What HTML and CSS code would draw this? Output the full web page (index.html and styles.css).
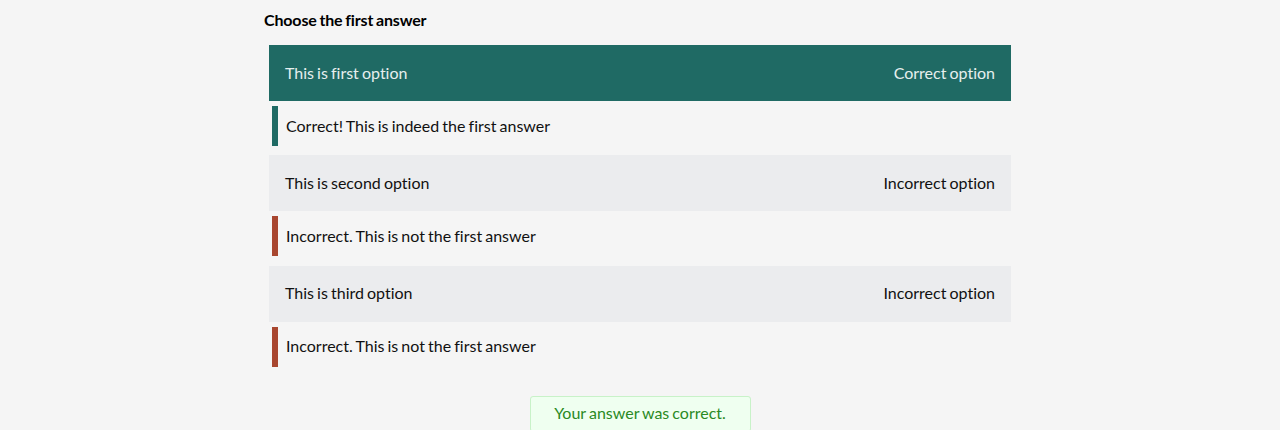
FILE: index.html
```html
<!DOCTYPE html>
<html lang="en">
<head>
<meta charset="utf-8">
<title>Quiz</title>
<link rel="stylesheet" href="styles.css">
</head>
<body>
<main class="quiz">
  <h2 class="question">Choose the first answer</h2>
  <div class="options">
    <div class="option option--correct">
      <span>This is first option</span>
      <span>Correct option</span>
    </div>
    <div class="feedback feedback--correct">Correct! This is indeed the first answer</div>
    <div class="option">
      <span>This is second option</span>
      <span>Incorrect option</span>
    </div>
    <div class="feedback feedback--wrong">Incorrect. This is not the first answer</div>
    <div class="option">
      <span>This is third option</span>
      <span>Incorrect option</span>
    </div>
    <div class="feedback feedback--wrong">Incorrect. This is not the first answer</div>
  </div>
  <div class="result-wrap">
    <div class="result">Your answer was correct.</div>
  </div>
</main>
</body>
</html>
```

FILE: styles.css
```css
html, body {
  margin: 0;
  padding: 0;
  background: #f5f5f5;
}
body {
  font-family: Lato, "Noto Sans", sans-serif;
  font-size: 16px;
  color: #111;
  word-spacing: -1px;
  font-variant-ligatures: none;
}
.quiz {
  width: 752px;
  margin: 0 auto;
  padding-top: 10px;
}
.question {
  margin: 0;
  font-size: 16px;
  font-weight: 700;
  line-height: 20px;
  letter-spacing: -0.15px;
  color: #000;
}
.options {
  margin: 15px 5px 0;
  display: flex;
  flex-direction: column;
}
.option {
  height: 56px;
  box-sizing: border-box;
  display: flex;
  align-items: center;
  justify-content: space-between;
  padding: 0 16px 2px;
  background: #ebecee;
  color: #111;
}
.option--correct {
  background: #1f6a64;
  color: #e6efee;
}
.feedback {
  margin: 5px 0 9.4px 3px;
  height: 40px;
  box-sizing: border-box;
  display: flex;
  align-items: center;
  padding: 0 0 2px 8px;
  border-left: 6px solid #a8462f;
  color: #111;
}
.feedback--correct {
  border-left-color: #1f6a64;
}
.feedback:last-child {
  margin-bottom: 0;
}
.result-wrap {
  display: flex;
  justify-content: center;
  margin-top: 29px;
}
.result {
  width: 221px;
  box-sizing: border-box;
  height: 36px;
  display: flex;
  align-items: center;
  justify-content: center;
  padding-bottom: 2px;
  background: #effff0;
  border: 1px solid #c8f2c8;
  border-radius: 3px;
  color: #2a8a24;
}
```
